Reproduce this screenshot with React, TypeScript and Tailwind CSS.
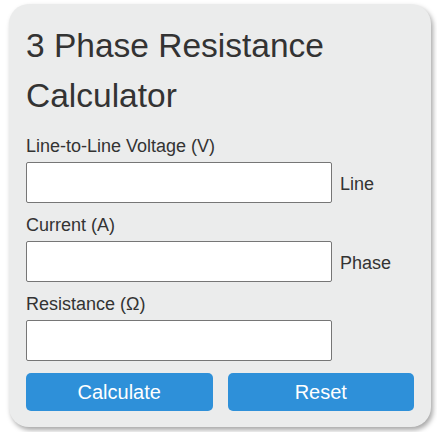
import React from "react";

const font = { fontFamily: '"Liberation Sans", Arial, sans-serif' };

function Field({ label, unit }: { label: string; unit?: string }) {
  return (
    <div className="mb-[12px]">
      <label className="block text-[18px] leading-[21px] text-[#333]">{label}</label>
      <div className="mt-[5px] flex items-center">
        <input
          type="text"
          className="h-[41px] w-[306px] rounded-[2px] border border-[#767676] bg-white px-2 text-[16px] outline-none"
        />
        {unit && <span className="ml-[8px] pt-[3px] text-[18px] text-[#333]">{unit}</span>}
      </div>
    </div>
  );
}

export default function App() {
  return (
    <div className="min-h-[432px] bg-white pl-[9px] pt-[4px]" style={font}>
      <div className="w-[422px] rounded-[20px] bg-[#ebecec] p-[17px] pb-[16px] shadow-[2px_3px_5px_rgba(0,0,0,0.35)]">
        <h1 className="mb-[15px] text-[33.5px] font-normal leading-[50px] text-[#333]">
          3 Phase Resistance Calculator
        </h1>
        <Field label="Line-to-Line Voltage (V)" unit="Line" />
        <Field label="Current (A)" unit="Phase" />
        <Field label="Resistance (Ω)" />
        <div className="mt-[1px] flex gap-[15px]">
          <button className="h-[38px] flex-1 rounded-[5px] bg-[#2e90d9] text-[20px] text-white">
            Calculate
          </button>
          <button className="h-[38px] flex-1 rounded-[5px] bg-[#2e90d9] text-[20px] text-white">
            Reset
          </button>
        </div>
      </div>
    </div>
  );
}
